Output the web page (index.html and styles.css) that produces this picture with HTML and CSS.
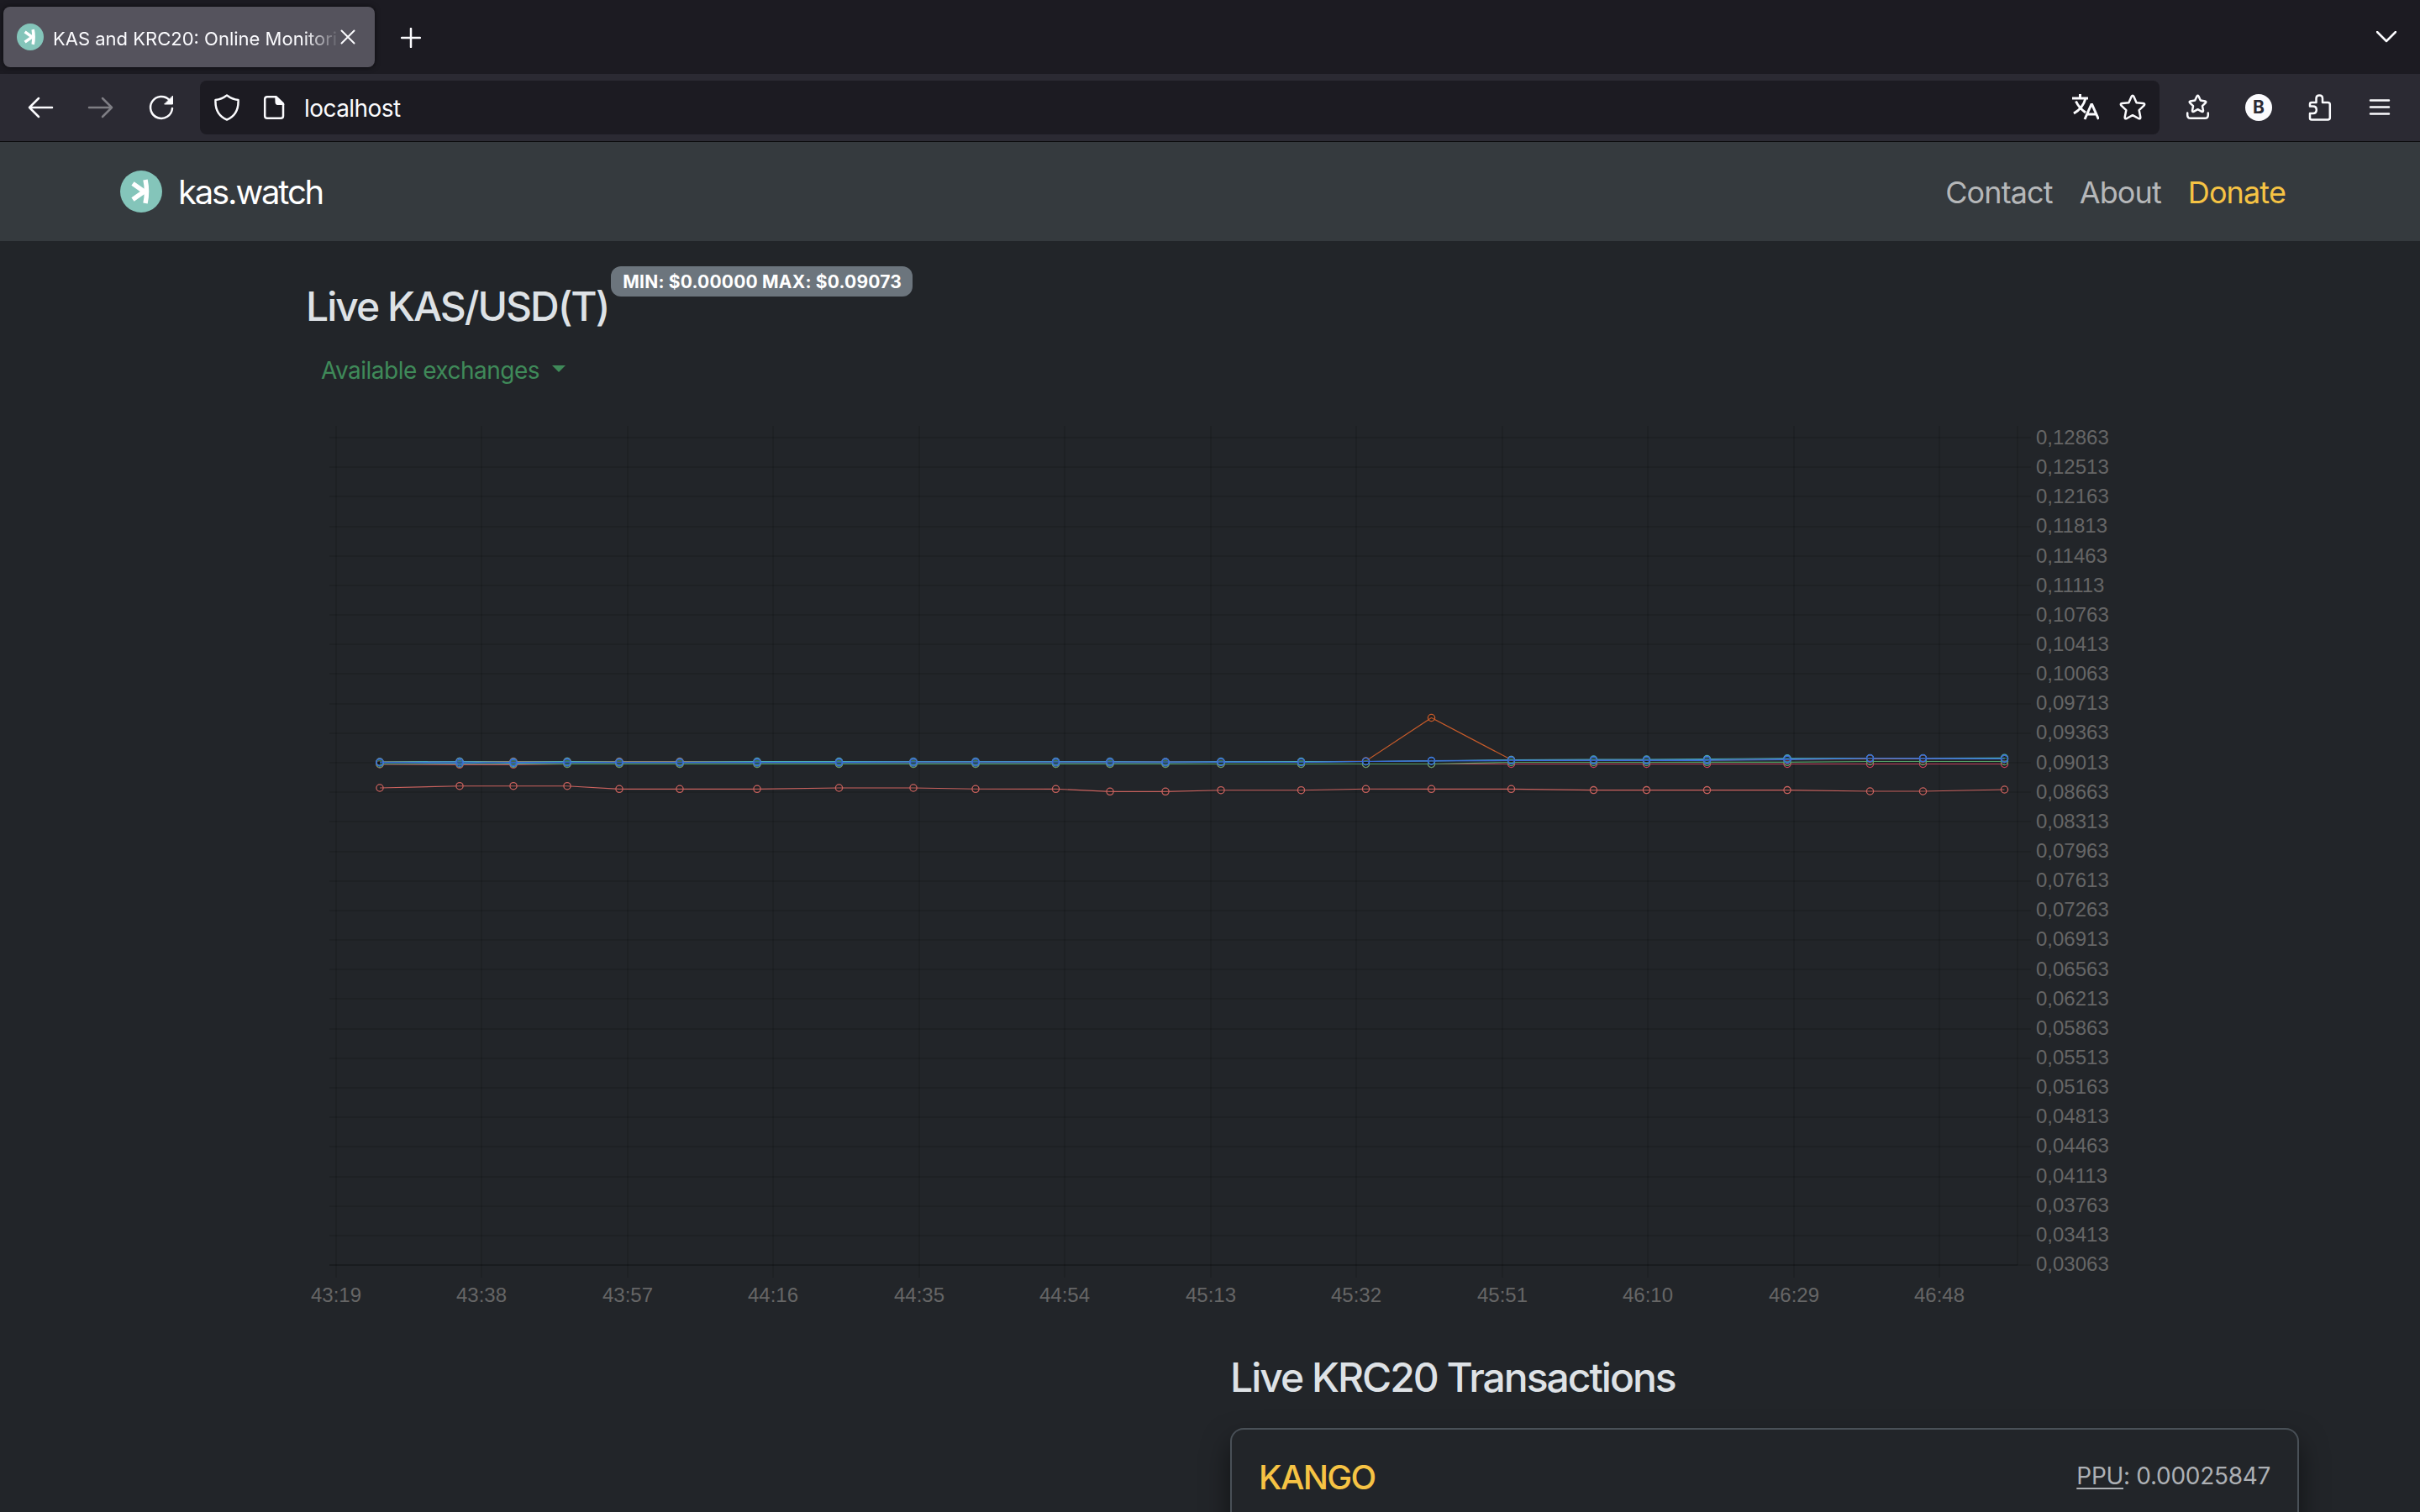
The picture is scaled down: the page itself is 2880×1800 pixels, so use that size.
FILE: index.html
```html
<!DOCTYPE html>
<html lang="en">
<head>
    <meta charset="UTF-8">
    <meta name="viewport" content="width=device-width, initial-scale=1.0">
    <title>KAS and KRC20: Online Monitoring</title>
    <link rel="stylesheet" href="styles.css">
</head>
<body>
    <div class="tabbar">
        <div class="tab">
            <svg class="favicon" viewBox="0 0 50 50"><circle cx="25" cy="25" r="25" fill="#84c5ba"/><path d="M30 11 Q33 25 30 39 M15 15.5 L28.5 25 L15 34.5" fill="none" stroke="#fff" stroke-width="5.5"/></svg>
            <span class="tab-title">KAS and KRC20: Online Monitori</span>
            <svg class="tab-close" viewBox="0 0 18 18"><path d="M1.5 1.5 L16.5 16.5 M16.5 1.5 L1.5 16.5"/></svg>
        </div>
        <svg class="new-tab" viewBox="0 0 24 24"><path d="M12 1 V23 M1 12 H23"/></svg>
        <svg class="all-tabs" viewBox="0 0 24 14"><path d="M1 1 L12 12 L23 1"/></svg>
    </div>

    <div class="toolbar">
        <div class="nav-buttons">
            <svg viewBox="0 0 32 32"><path d="M30 16 H3 M14 5 L3 16 L14 27"/></svg>
            <svg class="disabled" viewBox="0 0 32 32"><path d="M2 16 H29 M18 5 L29 16 L18 27"/></svg>
            <svg viewBox="0 0 32 32"><path d="M29 17 A13 13 0 1 1 25.5 7"/><path class="solid" d="M29.5 2.5 V12 H20 Z"/></svg>
        </div>
        <div class="urlbar">
            <svg viewBox="0 0 32 32"><path d="M16 1.5 C12 4.5 7 6.5 2.5 7 C2 17 5.5 26 16 30.5 C26.5 26 30 17 29.5 7 C25 6.5 20 4.5 16 1.5 Z"/></svg>
            <svg class="page-icon" viewBox="0 0 32 32"><path d="M8 3.2 H18.5 L27 11.5 V26 Q27 28.8 24.2 28.8 H8 Q5.2 28.8 5.2 26 V6 Q5.2 3.2 8 3.2 Z"/><path class="solid" d="M18 2.5 L28 12.5 H20 Q18 12.5 18 10.5 Z"/></svg>
            <span class="url">localhost</span>
            <svg class="translate" viewBox="0 0 32 32"><path d="M0 5 H19 M9.5 0 V5 M16 5 C14 13 9 19 2 23 M4.5 8.5 C7 14 11 18.5 16 22 M15 30 L22.8 12.5 H23.7 L31.5 30 M18 24 H28.5"/></svg>
            <svg viewBox="0 0 32 32"><path d="M14.6 2.9 Q16 .6 17.4 2.9 L20.6 10.2 L28.6 11.1 Q31.2 11.6 29.5 13.7 L23.7 19.2 L25.3 27.4 Q25.5 30 23 29 L16 25.2 L9 29 Q6.5 30 6.7 27.4 L8.3 19.2 L2.5 13.7 Q.8 11.6 3.4 11.1 L11.4 10.2 Z"/></svg>
        </div>
        <div class="tool-buttons">
            <svg viewBox="0 0 32 32"><path d="M14.5 2.6 Q15.5 1 16.5 2.6 L18.8 7.6 L24.3 8.4 Q26 9 24.9 10.3 L21 14.2 L22 19.700 Q22 21.5 20.300 20.8 L15.5 18.2 L10.7 20.8 Q9 21.5 9 19.7 L10 14.2 L6.1 10.3 Q5 9 6.7 8.4 L12.2 7.6 Z M3.2 22.500 V25 Q3.2 28.8 7 28.8 H24 Q27.8 28.8 27.8 25 V22.5"/></svg>
            <span class="account">B</span>
            <svg viewBox="0 0 32 32"><path d="M5 14.5 V12 Q5 10 7 10 H12.5 V5.2 Q12.5 1.5 16.2 1.5 Q20 1.5 20 5.2 V10 H26.3 Q28.8 10 28.8 12.5 V28 Q28.8 30.5 26.3 30.5 H7 Q5 30.5 5 28.5 V23 H8.5 Q12.8 23 12.8 18.700 Q12.8 14.5 8.5 14.5 Z"/></svg>
            <svg viewBox="0 0 32 32"><path d="M5 7.5 H27 M5 15.5 H27 M5 23.5 H27"/></svg>
        </div>
    </div>

    <nav class="navbar">
        <a class="brand" href="#">
            <svg class="logo" viewBox="0 0 50 50"><circle cx="25" cy="25" r="25" fill="#84c5ba"/><path d="M30 11 Q33 25 30 39 M15 15.5 L28.5 25 L15 34.5" fill="none" stroke="#fff" stroke-width="5.5"/></svg>
            <span>kas.watch</span>
        </a>
        <div class="nav-links">
            <a href="#">Contact</a>
            <a href="#">About</a>
            <a href="#" class="donate">Donate</a>
        </div>
    </nav>

    <main>
        <section class="price">
            <div class="price-title">
                <h2>Live KAS/USD(T)</h2>
                <span class="badge">MIN: $0.00000 MAX: $0.09073</span>
            </div>
            <button class="dropdown" type="button">Available exchanges</button>
            <svg id="chart" width="2160" height="1070"></svg>
        </section>

        <section class="transactions">
            <h2>Live KRC20 Transactions</h2>
            <div class="card">
                <span class="token">KANGO</span>
                <span class="ppu"><abbr>PPU</abbr>: 0.00025847</span>
            </div>
        </section>
    </main>

    <script src="chart.js"></script>
</body>
</html>
```
FILE: styles.css
```css
* {
    box-sizing: border-box;
}
body {
    margin: 0;
    height: 1800px;
    overflow: hidden;
    background-color: #222529;
    color: #dee2e6;
    font-family: Inter, "Liberation Sans", sans-serif;
}
svg {
    display: block;
    flex: none;
}
a {
    color: inherit;
    text-decoration: none;
}

/* browser */
.tabbar {
    display: flex;
    align-items: center;
    height: 88px;
    padding: 0 28px 0 4px;
    background-color: #1c1b22;
}
.tab {
    display: flex;
    align-items: center;
    width: 442px;
    height: 72px;
    padding: 0 23px 0 16px;
    border-radius: 8px;
    background-color: #55535d;
    box-shadow: 0 0 6px rgba(0, 0, 0, 0.6);
    color: #fbfbfe;
}
.favicon {
    width: 32px;
    height: 32px;
}
.tab-title {
    flex: 1;
    min-width: 0;
    margin-left: 11px;
    padding-top: 3px;
    white-space: nowrap;
    font-size: 22px;
    font-weight: 420;
    line-height: 30px;
    -webkit-mask-image: linear-gradient(to right, #000 88%, transparent 101%);
    mask-image: linear-gradient(to right, #000 88%, transparent 101%);
}
.tab-close {
    width: 18px;
    height: 18px;
    margin-left: 3px;
}
.new-tab {
    width: 24px;
    height: 24px;
    margin: 1px 0 0 31px;
}
.all-tabs {
    width: 24px;
    height: 14px;
    margin-left: auto;
}
.tabbar path, .toolbar path {
    fill: none;
    stroke: #fbfbfe;
    stroke-width: 2.5;
    stroke-linecap: round;
    stroke-linejoin: round;
}
.tabbar .tab-close path {
    stroke-width: 2;
}
.tabbar .favicon path {
    stroke: #fff;
    stroke-width: 5.5;
    stroke-linecap: butt;
    stroke-linejoin: miter;
}
.toolbar {
    display: flex;
    align-items: center;
    height: 81px;
    padding: 0 32px;
    background-color: #2b2a33;
    border-bottom: 1px solid #0c0c0d;
}
.toolbar svg {
    width: 32px;
    height: 32px;
}
.toolbar .solid {
    fill: #fbfbfe;
    stroke-width: 1;
}
.toolbar .translate path {
    stroke-width: 3;
    stroke-linecap: butt;
    stroke-linejoin: miter;
}
.nav-buttons {
    display: flex;
    gap: 40px;
    width: 206px;
}
.disabled {
    opacity: 0.4;
}
.urlbar {
    display: flex;
    align-items: center;
    flex: 1;
    height: 64px;
    padding: 0 16px;
    border-radius: 8px;
    background-color: #1c1b22;
    color: #fbfbfe;
}
.page-icon {
    margin-left: 24px;
}
.url {
    margin-left: 20px;
    padding-top: 2px;
    font-size: 28px;
    letter-spacing: -0.55px;
}
.translate {
    margin-left: auto;
    margin-right: 24px;
}
.tool-buttons {
    display: flex;
    align-items: center;
    gap: 40px;
    margin-left: 30px;
}
.account {
    width: 32px;
    height: 32px;
    border-radius: 50%;
    background-color: #fbfbfe;
    color: #2b2a33;
    font-size: 21px;
    font-weight: 700;
    line-height: 31px;
    text-align: center;
}

/* site header */
.navbar {
    display: flex;
    align-items: center;
    justify-content: space-between;
    height: 118px;
    padding: 0 160px 0 143px;
    background-color: #353a3e;
}
.brand {
    display: flex;
    align-items: center;
    gap: 19px;
    color: #fff;
    font-size: 40px;
    letter-spacing: -2.15px;
}
.logo {
    width: 50px;
    height: 50px;
}
.nav-links {
    display: flex;
    gap: 32px;
    padding-top: 2px;
    font-size: 36px;
    letter-spacing: -0.88px;
    color: #b5b7b9;
}
.nav-links .donate {
    color: #f6c344;
}

/* price chart */
h2 {
    margin: 0;
    font-size: 48px;
    font-weight: 520;
    line-height: 58px;
    letter-spacing: -2px;
}
main {
    height: 1513px;
    overflow: hidden;
}
.price {
    height: 1324px;
    padding: 30px 360px 0 360px;
}
.price-title {
    display: flex;
    align-items: flex-start;
    height: 103px;
    padding-left: 4px;
}
.price-title h2 {
    margin-top: 19px;
}
.badge {
    height: 36px;
    margin-left: 3px;
    padding: 0 13px 0 14px;
    border-radius: 12px;
    background-color: #6c757d;
    color: #fff;
    font-size: 21px;
    font-weight: 700;
    line-height: 37px;
    letter-spacing: 0.2px;
}
.dropdown {
    display: flex;
    align-items: center;
    height: 42px;
    margin-bottom: 38px;
    padding: 0 22px;
    border: none;
    background: none;
    color: #3f8a59;
    font-family: inherit;
    font-size: 28px;
    letter-spacing: -0.5px;
}
.dropdown::after {
    content: "";
    margin: -4px 0 0 15px;
    border: 8px solid transparent;
    border-top-color: #3f8a59;
    border-bottom: none;
}
#chart text {
    font-family: "Liberation Sans", Arial, sans-serif;
    font-size: 24px;
    fill: #666;
}

/* transactions */
.transactions {
    width: 1272px;
    margin-left: 1464px;
}
.card {
    display: flex;
    justify-content: space-between;
    height: 130px;
    margin-top: 31px;
    padding: 32px 32px 0 32px;
    border: 2px solid #495057;
    border-bottom: none;
    border-radius: 16px 16px 0 0;
    box-shadow: 0 16px 32px rgba(0, 0, 0, 0.5);
}
.token {
    color: #f6c344;
    font-size: 40px;
    font-weight: 500;
    line-height: 50px;
    letter-spacing: -1.6px;
}
.ppu {
    color: #adb0b4;
    font-size: 28px;
    line-height: 46px;
    letter-spacing: -0.3px;
}
.ppu abbr {
    text-decoration: underline;
    text-decoration-thickness: 2px;
    text-underline-offset: 4px;
}
```
FILE: chart.js
```js
const chart = document.getElementById('chart');
const NS = 'http://www.w3.org/2000/svg';

function add(tag, attrs, text) {
    const el = document.createElementNS(NS, tag);
    for (const key in attrs) {
        el.setAttribute(key, attrs[key]);
    }
    if (text) {
        el.textContent = text;
    }
    chart.appendChild(el);
}

// Grid and axes
const times = ['43:19', '43:38', '43:57', '44:16', '44:35', '44:54', '45:13', '45:32', '45:51', '46:10', '46:29', '46:48'];
times.forEach(function(time, i) {
    const x = Math.round(40 + i * 173.45);
    add('line', { x1: x, x2: x, y1: 7, y2: 1021, stroke: 'rgba(0,0,0,0.1)', 'stroke-width': 2 });
    add('text', { x: x, y: 1050, 'text-anchor': 'middle' }, time);
});
add('line', { x1: 2041, x2: 2041, y1: 7, y2: 1006, stroke: 'rgba(0,0,0,0.1)', 'stroke-width': 2 });

for (let i = 0; i <= 28; i++) {
    const y = Math.round(21 + i * 35.18);
    const value = (0.12863 - i * 0.0035).toFixed(5).replace('.', ',');
    add('line', { x1: 32, x2: 2057, y1: y, y2: y, stroke: 'rgba(0,0,0,0.1)', 'stroke-width': 2 });
    add('text', { x: 2063, y: Math.round(29 + i * 35.14) }, value);
}
add('line', { x1: 32, x2: 2041, y1: 1006, y2: 1006, stroke: 'rgba(0,0,0,0.15)', 'stroke-width': 2 });

// Exchanges
const xs = [92, 187, 251, 315, 377, 449, 541, 638.5, 727, 801, 896.5, 961, 1027, 1093, 1188.5, 1265.5, 1343.5, 1438.5, 1536.5, 1599.5, 1671.5, 1767, 1865.5, 1928.5, 2025.5];
const series = [
    { color: '#c9625e', ys: [438, 435.7, 435.7, 435.7, 439.3, 439.3, 439.3, 438, 438, 439.3, 439.3, 442.3, 442.3, 440.7, 440.7, 439.3, 439.3, 439.3, 440.6, 440.6, 440.6, 440.6, 442, 442, 440] },
    { color: '#c4425e', ys: [410, 410.3, 410.3, 409.5, 409.5, 409.5, 409.5, 409.5, 409.5, 409.5, 409.5, 409.5, 409.5, 409.5, 409.5, 409.5, 409.5, 409.5, 409.5, 409.5, 409.5, 409.5, 409.5, 409.5, 409.5] },
    { color: '#c95c2a', ys: [407, 406.5, 406.5, 406.5, 406.5, 406.5, 407, 407, 407, 407, 407, 407, 407, 407.5, 407, 406, 354.5, 404.5, 405, 405, 405, 404, 403.5, 403.5, 403.5] },
    { color: '#55a368', ys: [409.5, 409.5, 409.5, 409.5, 409.5, 409.5, 409.5, 409.5, 409.5, 409.5, 409.5, 409.5, 409.5, 409.5, 409.5, 409.5, 409.5, 407.5, 407.5, 407.5, 407.3, 407.3, 406.5, 406.5, 406.5] },
    { color: '#4aaeb4', ys: [407, 406.5, 407, 406.5, 407, 407, 406.5, 406.5, 406.5, 406.5, 406.5, 406.5, 407, 406.5, 406.5, 406.5, 406, 404.5, 404, 404, 403.5, 402.8, 402.5, 402.5, 402.3] },
    { color: '#4288d4', ys: [408, 407, 408.5, 408, 408, 408, 408, 408, 408, 408, 408, 408, 408, 407.5, 407.5, 406.5, 405.5, 405, 404.8, 404.8, 404.5, 403.5, 402.8, 402.8, 403.5] },
    { color: '#3b6bd8', ys: [407.5, 408.5, 407.5, 407.5, 407.5, 407.5, 407.5, 407.5, 407, 407, 407, 407, 407, 407, 407.5, 406.5, 406, 405.5, 405.5, 405.5, 405.3, 404.5, 402.8, 402.8, 403.5] }
];
series.forEach(function(s) {
    const points = xs.map(function(x, i) { return x + ',' + s.ys[i]; }).join(' ');
    add('polyline', { points: points, fill: 'none', stroke: s.color, 'stroke-width': 1.15 });
    xs.forEach(function(x, i) {
        add('circle', { cx: x, cy: s.ys[i], r: 4.1, fill: 'rgba(0,0,0,0.1)', stroke: s.color, 'stroke-width': 1.3 });
    });
});
```
